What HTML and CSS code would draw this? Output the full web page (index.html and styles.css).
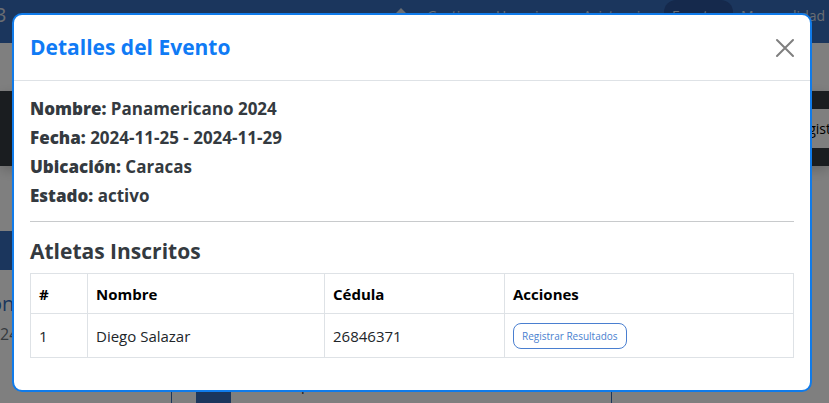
FILE: index.html
```html
<!DOCTYPE html>
<html lang="es">
<head>
<meta charset="utf-8">
<meta name="viewport" content="width=device-width, initial-scale=1">
<title>Detalles del Evento</title>
<link rel="stylesheet" href="styles.css">
</head>
<body>
<div class="page" aria-hidden="true">
  <header class="navbar">
    <span class="brand">3</span>
    <nav class="nav">
      <a href="#" tabindex="-1"><svg width="16" height="16" viewBox="0 0 16 16" fill="currentColor"><path d="M8 1 1 8h2v7h4v-4h2v4h4V8h2z"/></svg></a>
      <a href="#" tabindex="-1">Gestion</a>
      <a href="#" tabindex="-1">Usuarios</a>
      <a href="#" tabindex="-1">Asistencia</a>
      <a href="#" tabindex="-1" class="active">Eventos</a>
      <a href="#" tabindex="-1">Mensualidad</a>
    </nav>
  </header>
  <div class="toolbar"><button type="button" class="register" tabindex="-1">Registrar</button></div>
  <div class="banner"></div>
  <div class="event">
    <span class="event-name">on</span>
    <span class="event-date">24</span>
  </div>
  <div class="cards">
    <div class="card"></div>
    <div class="card"><div class="card-mark"></div><span class="card-text">p</span></div>
    <div></div>
  </div>
</div>

<div class="backdrop">
  <section class="modal" role="dialog" aria-modal="true" aria-labelledby="title">
    <header class="modal-header">
      <h1 id="title" class="modal-title">Detalles del Evento</h1>
      <button type="button" class="close" aria-label="Cerrar">
        <svg width="20" height="20" viewBox="0 0 20 20" fill="none" stroke="currentColor" stroke-width="2" stroke-linecap="round"><path d="M2 2l16 16M18 2L2 18"/></svg>
      </button>
    </header>
    <div class="modal-body">
      <p class="detail"><strong>Nombre:</strong> Panamericano 2024</p>
      <p class="detail"><strong>Fecha:</strong> 2024-11-25 - 2024-11-29</p>
      <p class="detail"><strong>Ubicación:</strong> Caracas</p>
      <p class="detail"><strong>Estado:</strong> activo</p>
      <hr>
      <h2 class="subtitle">Atletas Inscritos</h2>
      <table class="athletes">
        <colgroup><col class="col-num"><col class="col-name"><col class="col-id"><col></colgroup>
        <thead><tr><th>#</th><th>Nombre</th><th>Cédula</th><th>Acciones</th></tr></thead>
        <tbody><tr><td>1</td><td>Diego Salazar</td><td>26846371</td><td><button type="button" class="results">Registrar Resultados</button></td></tr></tbody>
      </table>
    </div>
  </section>
</div>
</body>
</html>
```
FILE: styles.css
```css
* { box-sizing: border-box; }

body {
  margin: 0;
  background: #fff;
  color: #212529;
  font-family: "Segoe UI", "Open Sans", "Noto Sans", sans-serif;
  font-size: 14px;
  overflow: hidden;
}

.page {
  display: flex;
  flex-direction: column;
  height: 100vh;
}

.navbar {
  display: flex;
  justify-content: space-between;
  flex: 0 0 43px;
  background: #366cba;
  color: #d4dbe4;
}

.brand { font-size: 20px; line-height: 30px; margin-left: -5px; }

.nav {
  display: grid;
  grid-template-columns: 26px 69px 87px 89px 69px 96px;
  align-items: start;
}

.nav a {
  padding: 0 8px;
  color: inherit;
  font-size: 14px;
  line-height: 32px;
  text-decoration: none;
  white-space: nowrap;
}

.nav svg { display: block; margin-top: 7px; }
.nav .active { background: #2a5298; border-radius: 12px; }
.nav a:first-child { padding: 0; }

.toolbar {
  display: flex;
  justify-content: flex-end;
  align-items: center;
  flex: 0 0 75px;
  margin-top: 48px;
  background: #343a40;
  box-shadow: 0 4px 12px rgba(0, 0, 0, .2);
}

.register {
  width: 80px;
  height: 39px;
  padding: 0;
  margin-right: -32px;
  border: 0;
  background: #fff;
  color: #000;
  font: inherit;
}

.banner { flex: 0 0 39px; margin-top: 65px; width: 50%; background: #366cba; }

.event { display: flex; flex-direction: column; flex: 1 0 100px; padding-top: 20px; }
.event-name { margin-left: -10px; color: #366cba; font-size: 20px; line-height: 28px; }
.event-date { color: #6c757d; font-size: 16px; line-height: 32px; }

.cards {
  display: grid;
  grid-template-columns: 172px 440px 1fr;
  flex: 0 0 33px;
}

.card { display: flex; border-right: 1px solid #366cba; }
.card-mark { width: 35px; margin-left: 24px; background: #366cba; }
.card-text { margin-left: 70px; line-height: 30px; }

.backdrop {
  position: fixed;
  inset: 0;
  padding: 13px 17px 11px 12px;
  background: rgba(0, 0, 0, .5);
}

.modal {
  max-width: 800px;
  margin: 0 auto;
  border: 2px solid #107bea;
  border-radius: 10px;
  background: #fff;
}

.modal-header {
  display: flex;
  align-items: center;
  justify-content: space-between;
  padding: 16px;
  border-bottom: 1px solid #dee2e6;
}

.modal-title {
  margin: 0;
  color: #107bf5;
  font-size: 21px;
  font-weight: 700;
  line-height: 33px;
}

.close {
  display: flex;
  padding: 0;
  margin-right: -1px;
  border: 0;
  background: none;
  color: #7f7f7f;
}

.modal-body { padding: 13px 16px 32px; }

.detail {
  margin: 0;
  color: #343a40;
  font-size: 17px;
  font-weight: 700;
  line-height: 29px;
}

.detail strong { font-weight: 800; }

hr { margin: 11px 0 16px; border: 0; border-top: 1px solid #c8cacc; }

.subtitle {
  margin: 0 0 8px;
  color: #343a40;
  font-size: 21px;
  font-weight: 700;
  line-height: 27px;
}

.athletes {
  width: 100%;
  border-collapse: collapse;
  table-layout: fixed;
  font-size: 15px;
}

.col-num { width: 57px; }
.col-name { width: 237px; }
.col-id { width: 180px; }

.athletes th,
.athletes td {
  height: 40px;
  padding: 0 8px;
  border: 1px solid #dee2e6;
  text-align: left;
  vertical-align: middle;
}

.athletes th { color: #000; font-weight: 700; }
.athletes td { height: 44px; }

.results {
  display: block;
  height: 26px;
  padding: 0 8px;
  border: 1px solid #4a7fd0;
  border-radius: 8px;
  background: #fff;
  color: #4a7fd0;
  font-family: inherit;
  font-size: 10px;
}
```
